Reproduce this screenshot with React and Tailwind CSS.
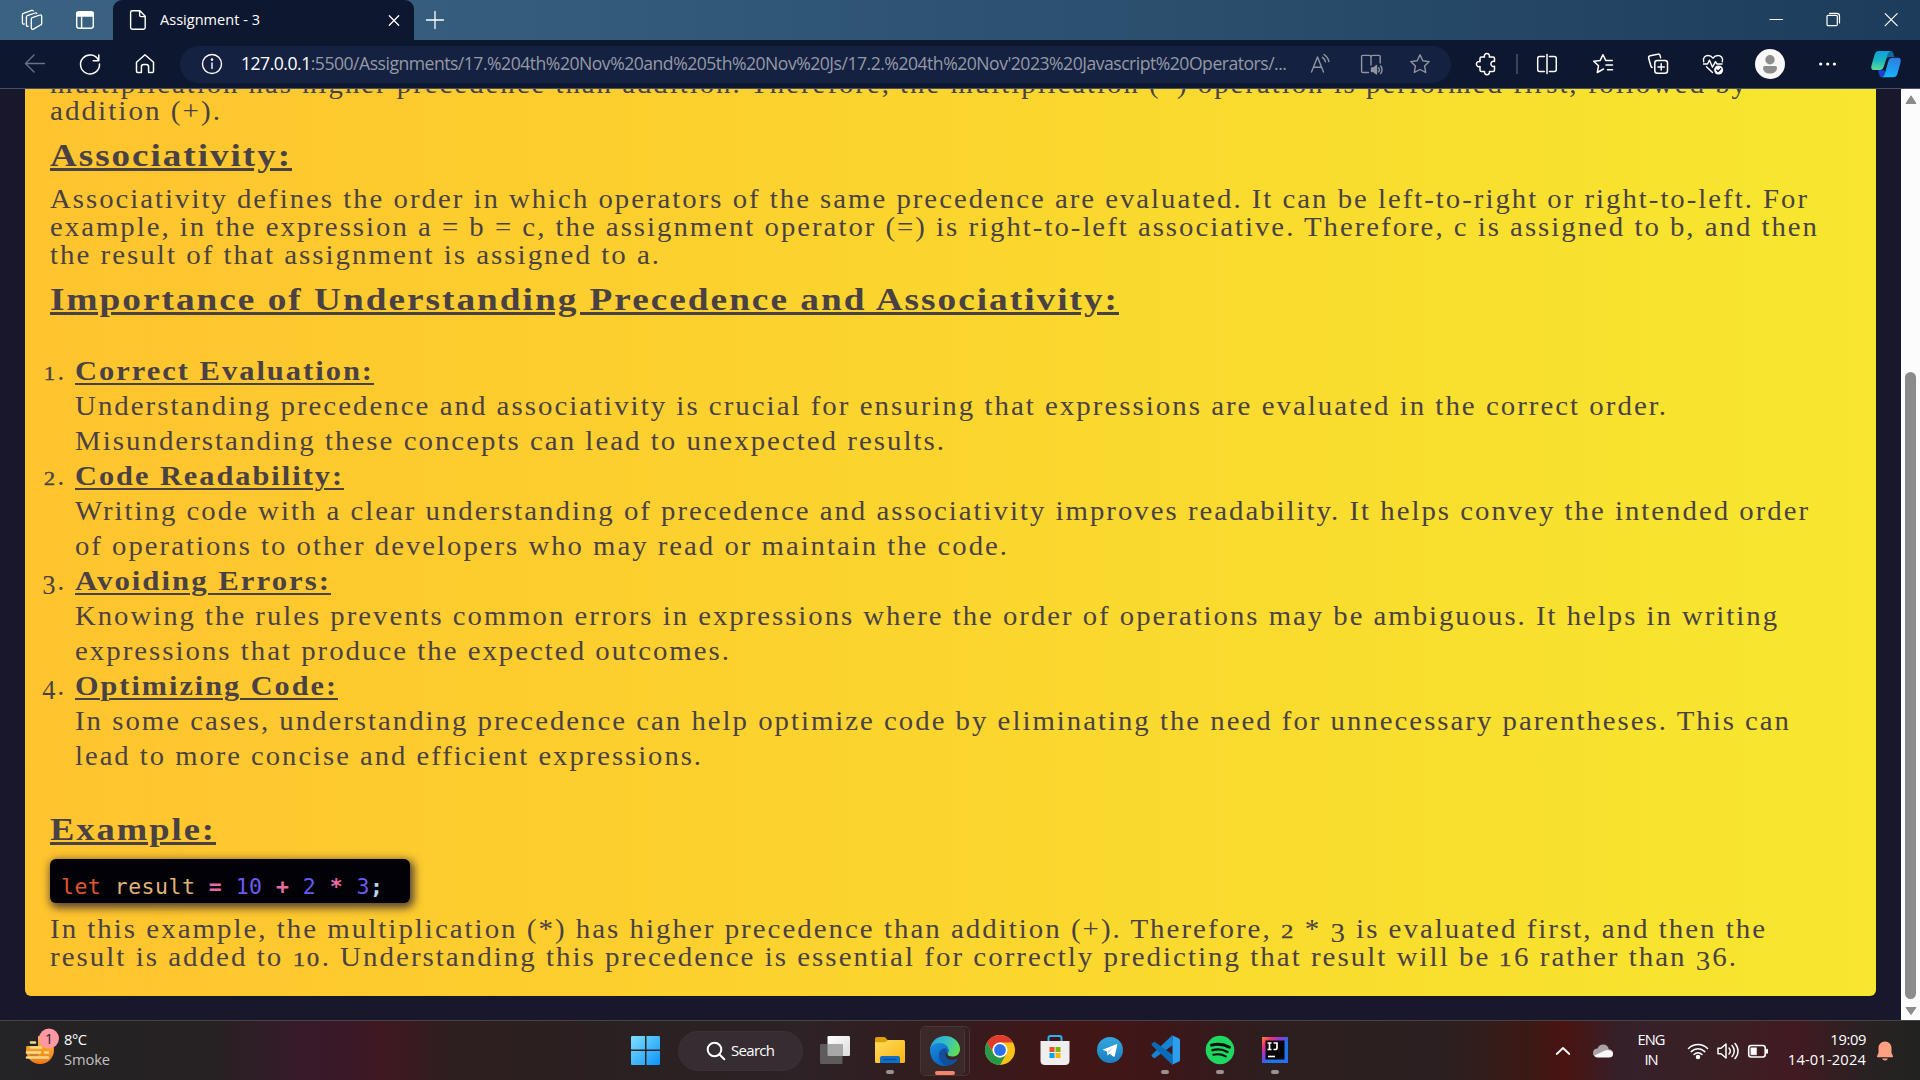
import React, { useLayoutEffect, useRef, useState } from "react";

/* A single line of text whose tracking is computed so that it spans `w` pixels. */
function Fit({ w, className = "", children }) {
  const ref = useRef(null);
  const [ls, setLs] = useState(0);
  useLayoutEffect(() => {
    const el = ref.current;
    el.style.letterSpacing = "0px";
    const natural = el.getBoundingClientRect().width;
    const value = (w - natural) / (el.textContent.length - 1);
    el.style.letterSpacing = value + "px";
    setLs(value);
  }, [w]);
  return (
    <span ref={ref} className={"inline-block whitespace-nowrap " + className} style={{ letterSpacing: ls + "px" }}>
      {children}
    </span>
  );
}

/* A line of page copy: 2px tracking, with glyphs widened to fill `w` pixels. */
function Wide({ w, trail = false, className = "", children }) {
  const ref = useRef(null);
  const [k, setK] = useState(1);
  useLayoutEffect(() => {
    const el = ref.current;
    el.style.letterSpacing = "0px";
    el.style.transform = "none";
    const natural = el.getBoundingClientRect().width;
    const n = el.textContent.length - (trail ? 0 : 1);
    const value = (w - 2 * n) / natural;
    el.style.letterSpacing = 2 / value + "px";
    el.style.transform = "scaleX(" + value + ")";
    setK(value);
  }, [w, trail]);
  return (
    <span ref={ref} className={"inline-block origin-left whitespace-nowrap " + className} style={{ letterSpacing: 2 / k + "px", transform: `scaleX(${k})` }}>
      {children}
    </span>
  );
}

/* Old-style figures: small ones sit at x-height, tall ones hang below the baseline. */
const Low = ({ children }) => <span className="mx-px inline-block h-5 scale-x-[1.2] text-[19px] leading-5 [-webkit-text-stroke:0.3px_#4a4145]">{children}</span>;
const Hang = ({ children }) => <span className="relative top-[4px]">{children}</span>;

const Line = ({ w, children }) => (
  <div className="h-7 leading-7">
    <Wide w={w}>{children}</Wide>
  </div>
);

const Heading = ({ w, className = "", children }) => (
  <h2 className={"h-10 text-[30.5px] font-bold leading-10 " + className}>
    <Wide w={w} trail className="underline decoration-[3px] underline-offset-[2px]">{children}</Wide>
  </h2>
);

const Item = ({ n, title, w, lines }) => (
  <li className="flex">
    <span className="h-[35px] w-[25px] shrink-0 -translate-x-[9px] whitespace-nowrap leading-[35px] tracking-[2px]">
      <span className="flex justify-end">{n}</span>
    </span>
    <div>
      <div className="h-[35px] font-bold leading-[35px]">
        <Wide w={w} trail className="underline decoration-2 underline-offset-[3px]">{title}</Wide>
      </div>
      {lines.map(([lw, t]) => (
        <div key={t} className="h-[35px] leading-[35px]">
          <Wide w={lw}>{t}</Wide>
        </div>
      ))}
    </div>
  </li>
);

const Ico = ({ className = "", s = 24, sw = 1.4, children }) => (
  <svg width={s} height={s} viewBox={`0 0 ${s} ${s}`} fill="none" stroke="currentColor" strokeWidth={sw} strokeLinecap="round" strokeLinejoin="round" className={"shrink-0 " + className}>
    {children}
  </svg>
);

const Star = "M12 2.8l2.8 5.9 6.4.9-4.6 4.5 1.1 6.4-5.7-3-5.7 3 1.1-6.4L2.8 9.6l6.4-.9z";

function TitleBar() {
  return (
    <div className="flex h-10 bg-[linear-gradient(90deg,#3a6382_0%,#335b7a_30%,#2a4d6c_65%,#1d3c5b_100%)] text-white">
      <Ico className="ml-5 mt-2" sw={1.3}>
        <path d="M12.300 9.600l7.600-2.600c.9-.3 1.800.3 1.800 1.200v7.200c0 .6-.3 1.100-.9 1.400l-7.400 4.300c-1 .5-2.100 0-2.100-1.200v-9c0-.6.4-1.100 1-1.300z M8.200 18.200l-.8.200c-.6 0-1-.4-1-1V8.900c0-.6.400-1.100 1-1.300L15.200 5c.7-.2 1.300 0 1.600.5 M4.200 16l-.8.100c-.6 0-1-.4-1-1V6.700c0-.6.400-1.100 1-1.300l8.300-3c.7-.2 1.300 0 1.600.5" />
      </Ico>
      <Ico className="ml-[29px] mt-2">
        <rect x="3.700" y="3.700" width="16.600" height="16.600" rx="2.600" />
        <path d="M4 4.500h16V8H4z" fill="currentColor" />
        <path d="M8.600 8v12" />
      </Ico>
      <div className="ml-[16px] flex h-10 w-[301px] rounded-t-[9px] bg-[#0e1730]">
        <Ico className="ml-[13px] mt-2">
          <path d="M6.700 2.700h7.200l5.300 5.500v11.300c0 1-.7 1.700-1.700 1.700H6.300c-1 0-1.700-.7-1.700-1.700V4.400c0-1 .7-1.700 1.700-1.700z M13.600 3v4c0 1 .6 1.600 1.600 1.600h3.800" />
        </Ico>
        <span className="ml-[10px] w-[100px] pt-[10px] text-[14.5px] leading-5">
          <Fit w={100}>Assignment - 3</Fit>
        </span>
        <Ico className="ml-[122px] mt-2" sw={1.300}><path d="M7.300 7.800l9.400 9.400M16.700 7.800l-9.400 9.400" /></Ico>
      </div>
      <Ico className="ml-[9px] mt-2" sw={1.300}><path d="M12 3.500v17M3.500 12h17" /></Ico>
      <div className="flex-1" />
      <Ico className="mt-2" sw={1.200}><path d="M6 11.500h12.500" /></Ico>
      <Ico className="ml-[33px] mt-2" sw={1.200}>
        <rect x="6" y="7.300" width="10.300" height="10.300" rx="1.200" />
        <path d="M8.600 5.400h7.200c1.700 0 2.700 1 2.700 2.600v7" />
      </Ico>
      <Ico className="ml-[34px] mr-[17px] mt-2" sw={1.200}><path d="M6.200 5.700l12 12M18.200 5.700l-12 12" /></Ico>
    </div>
  );
}

function Toolbar() {
  return (
    <div className="flex h-12 items-center bg-[#0e1730] text-white">
      <Ico className="ml-[23px] text-[#6a7183]"><path d="M21.500 11.500H2.500M11 3L2.500 11.500 11 20" /></Ico>
      <Ico className="ml-[31px]" sw={1.500}>
        <path d="M20.700 8.600A9.500 9.500 0 1 0 21.500 12 M20.800 3v5.700h-5.600" />
      </Ico>
      <Ico className="ml-[31px]" sw={1.500}>
        <path d="M3.500 10.200L12 2.700l8.500 7.500v9c0 .7-.5 1.200-1.200 1.200h-3.700v-5.600c0-1.600-.8-2.400-2.200-2.400h-2.800c-1.400 0-2.200.8-2.200 2.400v5.600H4.700c-.7 0-1.200-.5-1.200-1.200z" />
      </Ico>
      <div className="ml-[23px] flex h-[37px] w-[1271px] items-center rounded-full bg-[#152141]">
        <Ico className="ml-[20px]">
          <circle cx="12" cy="12" r="9.500" />
          <path d="M12 11v5.500" />
          <circle cx="12" cy="7.600" r=".6" fill="currentColor" />
        </Ico>
        <div className="-mt-[2px] ml-[17px] w-[1058px] text-[17.6px] leading-6 text-[#9499a5]">
          <Fit w={1046}>
            <span className="text-white">127.0.0.1</span>:5500/Assignments/17.%204th%20Nov%20and%205th%20Nov%20Js/17.2.%204th%20Nov'2023%20Javascript%20Operators/...
          </Fit>
        </div>
        <Ico className="ml-[9px] text-[#92959e]">
          <path d="M3.500 20L9.500 5l6 15M5.500 15.200h8M14.400 5.300c1.600 1 2.700 2.600 3.100 4.500M16 2.500c2.500 1.600 4.300 4 5 7" />
        </Ico>
        <Ico className="ml-[27px] text-[#92959e]">
          <path d="M12 5v8M9.500 20.500H3.800c-.7 0-1.200-.5-1.200-1.200V4.600c0-.7.5-1.200 1.200-1.200H10c1.200 0 2 .7 2 1.700 0-1 .8-1.700 2-1.700h6c.7 0 1.200.5 1.200 1.200V11" />
          <path d="M12.500 16h2l3-2.500v8.500l-3-2.500h-2z" fill="currentColor" />
          <path d="M19.700 15.800c.8 1.200.8 2.800 0 4M21.700 14c1.500 2.200 1.500 5.400 0 7.600" />
        </Ico>
        <Ico className="ml-[25px] text-[#92959e]"><path d={Star} /></Ico>
      </div>
      <Ico className="ml-[24px]" sw={1.500}>
        <path d="M6.500 5h3a2.600 2.600 0 1 1 4.800 0H18c1 0 1.500.6 1.500 1.500v3a2.600 2.600 0 1 0 0 4.800v3.800c0 1-.6 1.500-1.500 1.500h-3.600a2.500 2.500 0 1 1-4.800 0H6.500c-1 0-1.500-.6-1.500-1.500v-3.600a2.600 2.600 0 1 1 0-4.800V6.500C5 5.600 5.500 5 6.500 5z" />
      </Ico>
      <div className="ml-[17px] h-5 w-[2px] bg-[#3c4459]" />
      <Ico className="ml-[17px]" sw={1.500}>
        <path d="M9.300 4.500H4.700c-1.200 0-2 .8-2 2v11c0 1.200.8 2 2 2h4.600M14.500 4.500h4.800c1.200 0 2 .8 2 2v11c0 1.200-.8 2-2 2h-4.800" />
        <path d="M12 2.500v19" />
      </Ico>
      <Ico className="ml-[32px]" sw={1.500}>
        <path d="M12.500 17l-6.200 3.500 1.200-6.700-4.800-4.500 6.500-.9L12 2.700l2.700 5.700h6.600M15 13h6.500M16.500 17.800h5" />
      </Ico>
      <Ico className="ml-[31px]" sw={1.500}>
        <rect x="8.800" y="8.500" width="12.700" height="12.700" rx="2.500" />
        <path d="M15.200 11.800v6.200M12 14.900h6.300M6.200 15.500c-.7-.3-1.200-1-1.400-1.800L2.700 6.200c-.3-1.100.3-2.100 1.400-2.400l7.600-1.600c1.100-.3 2.100.3 2.400 1.400l.5 2.100" />
      </Ico>
      <Ico className="ml-[31px]" sw={1.400}>
        <path d="M2.700 9.800C1.500 5.500 4.500 3.500 7 3.500c2 0 3.800 1 5 2.700 1.200-1.700 3-2.700 5-2.700 2.500 0 5.500 2 4.300 6.300M2.500 12h4l2-3.800 3 7 3-5.500 1.500 2.300h5M5.500 14.800l6 5.700" />
        <circle cx="17.600" cy="18" r="4.500" fill="currentColor" stroke="none" />
        <path d="M15.700 18.100l1.400 1.400 2.600-2.700" stroke="#0e1730" />
      </Ico>
      <svg className="ml-[30px] shrink-0" width="30" height="30" viewBox="0 0 30 30">
        <circle cx="15" cy="15" r="15" fill="#f8f8f8" />
        <circle cx="15" cy="10.800" r="4.700" fill="#8d8d8d" />
        <path d="M8 18.500a1.500 1.500 0 0 1 1.500-1.500h11a1.500 1.500 0 0 1 1.500 1.500c0 4-3 6-7 6s-7-2-7-6z" fill="#8d8d8d" />
      </svg>
      <Ico className="ml-[31px]"><g fill="currentColor" stroke="none"><circle cx="4.700" cy="12" r="1.600" /><circle cx="11.700" cy="12" r="1.600" /><circle cx="18.400" cy="12" r="1.600" /></g></Ico>
      <svg className="ml-[30px] shrink-0" width="32" height="30" viewBox="0 0 32 30">
        <defs>
          <linearGradient id="cpA" x1="0" y1="0" x2="0" y2="1"><stop offset="0" stopColor="#10a0de" /><stop offset=".5" stopColor="#19b5c0" /><stop offset="1" stopColor="#5fdc92" /></linearGradient>
          <linearGradient id="cpB" x1=".6" y1="0" x2=".4" y2="1"><stop offset="0" stopColor="#2f7be0" /><stop offset="1" stopColor="#16b4fb" /></linearGradient>
        </defs>
        <path d="M17 2h3.500c2 0 2.800 1.500 3.300 4l.6 2h-4.500c-2.500 0-3.500 1-4.300 3.500z" fill="#0a6c9c" />
        <path d="M8 20.800h5.500l2 2.500-.7 5H12c-1.800 0-2.700-1.300-3.200-3.500z" fill="#1c3fc9" />
        <path d="M9 2h12c-1.700 0-2.700 1.200-3.400 3.500L14 17c-1 3-2.300 4-4.500 4H4.200C1.500 21 .8 19 1.500 16.500l3-10.500C5.300 3.300 6.500 2 9 2z" fill="url(#cpA)" />
        <path d="M22.500 8.700h5.300c2.700 0 3.500 2 2.800 4.500l-3 11c-.8 2.800-2 4-4.500 4H11.500c1.700 0 2.700-1.200 3.300-3.500L18.200 12.700c.9-3 2.100-4 4.300-4z" fill="url(#cpB)" />
      </svg>
    </div>
  );
}

const ITEMS = [
  { n: <><Low>1</Low>.</>, title: "Correct Evaluation:", w: 299, lines: [
    [1591, "Understanding precedence and associativity is crucial for ensuring that expressions are evaluated in the correct order."],
    [869, "Misunderstanding these concepts can lead to unexpected results."]] },
  { n: <><Low>2</Low>.</>, title: "Code Readability:", w: 269, lines: [
    [1733, "Writing code with a clear understanding of precedence and associativity improves readability. It helps convey the intended order"],
    [932, "of operations to other developers who may read or maintain the code."]] },
  { n: <><Hang>3</Hang>.</>, title: "Avoiding Errors:", w: 256, lines: [
    [1702, "Knowing the rules prevents common errors in expressions where the order of operations may be ambiguous. It helps in writing"],
    [654, "expressions that produce the expected outcomes."]] },
  { n: <><Hang>4</Hang>.</>, title: "Optimizing Code:", w: 263, lines: [
    [1714, "In some cases, understanding precedence can help optimize code by eliminating the need for unnecessary parentheses. This can"],
    [626, "lead to more concise and efficient expressions."]] },
].map((it) => ({ ...it, n: <span>{it.n}</span> }));

function Page() {
  return (
    <div className="flex h-[931px] overflow-hidden bg-[#19172c]">
      <main className="ml-[25px] h-[907px] w-[1851px] overflow-hidden rounded-b-[6px] bg-[linear-gradient(90deg,#ffc42e_0%,#f7e72e_100%)] pl-[25px] font-['Liberation_Serif',serif] text-[26.5px] text-[#4a4145]">
        <div className="-mt-[19px]">
          <div className="h-[27px]">
            <Line w={1696}>multiplication has higher precedence than addition. Therefore, the multiplication (*) operation is performed first, followed by</Line>
          </div>
          <Line w={170}>addition (+).</Line>
        </div>
        <Heading w={242} className="mt-[11px]">Associativity:</Heading>
        <div className="mt-[9px]">
          <Line w={1757}>Associativity defines the order in which operators of the same precedence are evaluated. It can be left-to-right or right-to-left. For</Line>
          <Line w={1767}>example, in the expression a = b = c, the assignment operator (=) is right-to-left associative. Therefore, c is assigned to b, and then</Line>
          <Line w={609}>the result of that assignment is assigned to a.</Line>
        </div>
        <Heading w={1069} className="mt-[11px]">Importance of Understanding Precedence and Associativity:</Heading>
        <ol className="mt-[34px]">
          {ITEMS.map((it) => <Item key={it.title} {...it} />)}
        </ol>
        <Heading w={166} className="mt-[36px]">Example:</Heading>
        <div className="mt-[9px] h-11 w-[360px] rounded-[6px] bg-[#020107] pl-[11px] pt-[13px] font-['DejaVu_Sans_Mono',monospace] text-[21.500px] leading-[30px] shadow-[2px_3px_8px_2px_rgba(60,45,50,0.85)]">
          <Fit w={322} className="whitespace-pre">
            <span className="text-[#e0562f]">let</span>
            <span className="text-[#e0b476]"> result</span>
            <span className="font-bold text-[#e76ba0]"> =</span>
            <span className="text-[#6a5af0]"> 10</span>
            <span className="font-bold text-[#e76ba0]"> +</span>
            <span className="text-[#6a5af0]"> 2</span>
            <span className="font-bold text-[#e76ba0]"> *</span>
            <span className="text-[#6a5af0]"> 3</span>
            <span className="font-bold text-[#bcd7ee]">;</span>
          </Fit>
        </div>
        <div className="mt-3">
          <Line w={1715}>In this example, the multiplication (*) has higher precedence than addition (+). Therefore, <Low>2</Low> * <Hang>3</Hang> is evaluated first, and then the</Line>
          <Line w={1686}>result is added to <Low>1</Low><Low>0</Low>. Understanding this precedence is essential for correctly predicting that result will be <Low>1</Low>6 rather than <Hang>3</Hang>6.</Line>
        </div>
      </main>
      <div className="ml-auto flex w-[19px] flex-col items-center bg-[#fcfcfc]">
        <svg className="mt-[6px]" width="12" height="10" viewBox="0 0 12 10"><path d="M6 .8L11 8.500H1z" fill="#8b8b8b" stroke="#8b8b8b" strokeLinejoin="round" /></svg>
        <div className="mt-[267px] h-[627px] w-[11px] rounded-full bg-[#8b8b8b]" />
        <svg className="mt-[7px]" width="12" height="10" viewBox="0 0 12 10"><path d="M6 8.500L1 1.500h10z" fill="#8b8b8b" stroke="#8b8b8b" strokeLinejoin="round" /></svg>
      </div>
    </div>
  );
}

const App32 = ({ className = "", dot = false, children }) => (
  <div className={"relative h-[59px] w-8 shrink-0 " + className}>
    <svg className="mt-[13px]" width="32" height="32" viewBox="0 0 32 32">{children}</svg>
    {dot && <div className="absolute bottom-[6px] left-3 h-1 w-2 rounded-full bg-[#9a9192]" />}
  </div>
);

function Taskbar() {
  return (
    <div className="flex h-[60px] items-center border-t border-[#484345] bg-[linear-gradient(90deg,#242325_0%,#262122_11%,#371b2b_15.500%,#3a1828_18%,#401821_20%,#2d1e1f_23.500%,#2a2122_34%,#2d2226_42%,#321c1e_48%,#421617_56%,#3f1618_60%,#2d1e1f_66%,#2b2021_75%,#3a1914_79.500%,#491412_81.500%,#35202a_84.500%,#3b2023_90%,#421a21_93.500%,#2a2122_97%,#222221_100%)] text-[14.700px] leading-5 text-white">
      <svg className="ml-6 shrink-0" width="36" height="46" viewBox="0 0 36 46">
        <defs>
          <linearGradient id="sun" x1="0" y1="0" x2="0" y2="1"><stop offset="0" stopColor="#fbc02d" /><stop offset="1" stopColor="#f07a1c" /></linearGradient>
        </defs>
        <circle cx="16" cy="22" r="14" fill="url(#sun)" />
        <path d="M0 6h14v12H0z" fill="#242325" />
        <g stroke="#f6d98c" strokeWidth="2.600" strokeLinecap="round">
          <path d="M7 14.500h4M7 19.500h10M3 24.500h13M21 24.500h3M3 29.500h21" />
        </g>
        <path d="M6 27h8" stroke="#b97f2e" strokeWidth="1.500" />
        <circle cx="25" cy="10.500" r="10" fill="#ff98a2" />
        <text x="25" y="15.500" fontSize="14" fill="#222" textAnchor="middle" fontFamily="Open Sans, sans-serif">1</text>
      </svg>
      <div className="-mt-1 ml-1 flex w-[200px] flex-col items-start">
        <Fit w={23}>8°C</Fit>
        <Fit w={46} className="text-[#c4c0c1]">Smoke</Fit>
      </div>
      <App32 className="ml-[366px]">
        <defs><linearGradient id="win" x1="0" y1="0" x2="1" y2="1"><stop offset="0" stopColor="#7fe0ff" /><stop offset="1" stopColor="#0a94fa" /></linearGradient></defs>
        <path d="M2.500 2H15v13.500H1V3.500C1 2.500 1.500 2 2.500 2zM16.500 2h12c1 0 1.500.5 1.500 1.500v12H16.500zM1 17h14v14H2.500C1.500 31 1 30.500 1 29.500zM16.500 17H30v12.500c0 1-.5 1.500-1.500 1.500h-12z" fill="url(#win)" />
      </App32>
      <div className="ml-4 flex h-10 w-[125px] shrink-0 items-center rounded-full border border-[#3b3137] bg-[#362d33] pl-[27px] text-[15px]">
        <Ico s={20} sw={2}><circle cx="8.500" cy="8.500" r="6.800" /><path d="M13.500 13.500l4.800 4.800" /></Ico>
        <span className="-mt-[2px] ml-[5px]"><Fit w={44}>Search</Fit></span>
      </div>
      <App32 className="ml-4">
        <defs><linearGradient id="tv" x1="0" y1="0" x2="1" y2="1"><stop offset="0" stopColor="#fff" /><stop offset="1" stopColor="#dcdcdc" /></linearGradient></defs>
        <rect x="8.500" y="2" width="22.500" height="20" rx="1.200" fill="url(#tv)" />
        <rect x="1" y="10" width="22.500" height="20" rx="1.200" fill="#5d5b5c" />
        <path d="M8.500 10h15v12h-14q-1 0-1-1z" fill="#a9a8a8" />
      </App32>
      <App32 className="ml-[23px]" dot>
        <defs><linearGradient id="fo" x1="0" y1="0" x2="1" y2="1"><stop offset="0" stopColor="#ffdb60" /><stop offset="1" stopColor="#f8b50c" /></linearGradient></defs>
        <path d="M1 8V4.500Q1 3 2.500 3H10q1 0 1.800 1L14 6.500V10H1z" fill="#dea000" />
        <path d="M1 8.300h10l3-2.300h15.500Q31 6 31 7.500v20Q31 29 29.500 29h-27Q1 29 1 27.500z" fill="url(#fo)" />
        <path d="M6 29v-5q0-2 2-2h16q2 0 2 2v5z" fill="#0f6fc4" />
        <path d="M9.500 25.500h13" stroke="#0a4d94" strokeWidth="1.200" />
      </App32>
      <div className="relative ml-[14px] h-[50px] w-[50px] shrink-0 rounded-[5px] border border-[#4a3536] bg-[#35201f]">
        <div className="h-12 w-[44px] rounded-[5px] border-r border-[#4a3536] bg-[#3b2828] pl-[8px] pt-[8px]">
          <svg width="32" height="32" viewBox="0 0 32 32">
            <defs>
              <linearGradient id="e1" x1="0" y1=".2" x2="1" y2=".5"><stop offset="0" stopColor="#2aa6dd" /><stop offset=".55" stopColor="#35c1c0" /><stop offset="1" stopColor="#5fdf58" /></linearGradient>
              <linearGradient id="e2" x1="0" y1="0" x2=".5" y2="1"><stop offset="0" stopColor="#1b8ee0" /><stop offset="1" stopColor="#0a62bd" /></linearGradient>
            </defs>
            <path d="M1 14.500C2 6 8.500 1 16 1c9 0 15 6.500 15 13 0 5-3.500 7.500-7.500 7.500-3.500 0-5-1.300-5-2.300 0-.8 1-1.300 1-3.500 0-3-3-5.700-7.500-5.700C6 10 2 12 1 14.500z" fill="url(#e1)" />
            <path d="M1 15c0-4 4-7 9.500-7 5 0 9 3 9 7 0 2-1 2.800-1 4-.5-1.500-2-3-4-3-3 0-4.500 3-3.500 7 1 4 4.500 7.500 8 7.500-1.500.5-2.500.5-3.500.5C7 31 1 24 1 15z" fill="url(#e2)" />
            <path d="M14.500 13.500c-3 1-5 4-4.500 8 .5 5 5 9.500 10 9 4-.7 7-3.500 8.500-6 .3-.6-.2-1-.8-.7-6 2.700-11.200.2-11.200-4.800 0-2 .8-3 2-3.800-.8-1.200-2.200-2.300-4-1.700z" fill="#0f4f9c" />
          </svg>
        </div>
        <div className="absolute bottom-0 left-[14px] h-1 w-5 rounded-full bg-[#f4846a]" />
      </div>
      <App32 className="ml-[14px]">
        <circle cx="16" cy="16" r="15" fill="#fbc116" />
        <path d="M3 8.500A15 15 0 0 1 29 8.500H16a7.500 7.500 0 0 0-6.500 11.250z" fill="#e23b2e" />
        <path d="M3 8.500A15 15 0 0 0 16 31l6.500-11.250a7.500 7.500 0 0 1-13 0z" fill="#279847" />
        <circle cx="16" cy="16" r="7.500" fill="#fff" />
        <circle cx="16" cy="16" r="5.900" fill="#2b72e8" />
      </App32>
      <App32 className="ml-[23px]">
        <path d="M9.500 8V4q0-2 2-2h9q2 0 2 2v4" fill="none" stroke="#27b2f2" strokeWidth="2" />
        <path d="M1.500 7h29v19.500q0 4.500-4.500 4.500H6q-4.500 0-4.500-4.500z" fill="#efefef" />
        <path d="M10.500 13h5v5h-5z" fill="#f04e23" /><path d="M16.500 13h5v5h-5z" fill="#7cb70a" />
        <path d="M10.500 19h5v5h-5z" fill="#04a3ec" /><path d="M16.500 19h5v5h-5z" fill="#fcb602" />
      </App32>
      <App32 className="ml-[23px]">
        <defs><linearGradient id="tg" x1="0" y1="0" x2="0" y2="1"><stop offset="0" stopColor="#32a8e0" /><stop offset="1" stopColor="#1a7fbf" /></linearGradient></defs>
        <circle cx="16" cy="16" r="13" fill="url(#tg)" />
        <path d="M8.500 15.700L22.300 10.200q1.200-.4.900 1.100L20.800 22q-.4 1.200-1.500.6l-3.800-2.800-2 1.800-.6-4z" fill="#fff" />
        <path d="M13 18l6-4.500-4.500 5.500z" fill="#a8d3ee" />
      </App32>
      <App32 className="ml-[23px]" dot>
        <path d="M23 1.500L3 20.500q-1 1 0 2l1.500 1.300q.8.700 1.800 0L24 11z" fill="#1684cf" />
        <path d="M23 30.500L3 11.500q-1-1 0-2l1.500-1.300q.8-.7 1.800 0L24 21z" fill="#0a6cb6" />
        <path d="M22.500 1L30 4.500q1 .5 1 1.500v20q0 1-1 1.500L22.500 31q1-.7 1-2V3q0-1.300-1-2z" fill="#2b9fee" />
      </App32>
      <App32 className="ml-[23px]" dot>
        <circle cx="16" cy="16" r="14.300" fill="#1fd860" />
        <g fill="none" stroke="#0a0d0b" strokeLinecap="round"><path d="M7.500 11.200c6-1.700 12.500-1 18 2" strokeWidth="2.900" /><path d="M8.500 16.200c5-1.400 10.500-.8 15 1.800" strokeWidth="2.400" /><path d="M9.200 20.800c4.300-1.100 8.800-.6 12.500 1.600" strokeWidth="2" /></g>
      </App32>
      <App32 className="ml-[23px]" dot>
        <defs><linearGradient id="ij" x1="0" y1="0" x2="1" y2="1"><stop offset="0" stopColor="#ff8a2a" /><stop offset=".2" stopColor="#ee2f7d" /><stop offset=".42" stopColor="#7a3fe0" /><stop offset=".6" stopColor="#1477ee" /><stop offset="1" stopColor="#2a6df0" /></linearGradient></defs>
        <rect x="3" y="3" width="26" height="26" fill="url(#ij)" />
        <rect x="6.500" y="6.500" width="19" height="19" fill="#080307" />
        <path d="M8.500 9h4M10.500 9v6.500M8.500 15.500h4M14.500 9h3.500v4.800q0 1.700-1.800 1.700H14.500" fill="none" stroke="#fff" strokeWidth="1.700" />
        <path d="M9 22.500h7" stroke="#fff" strokeWidth="1.600" />
      </App32>
      <div className="flex-1" />
      <Ico sw={1.800}><path d="M5.700 15L12 9l6.300 6" /></Ico>
      <svg className="ml-[17px] shrink-0" width="22" height="24" viewBox="0 0 22 24">
        <path d="M1 14.500C1 10 4 9.500 5.500 9.500 6.500 7 8.500 5.500 11 5.500c3.300 0 5.300 2 5.800 4.700C19.500 10.200 21 12 21 14.500S19 18 17 18H5C3 18 1 17 1 14.500z" fill="#a9a1a3" />
        <path d="M2.500 16.500L12 12q3-1.500 5-.8c3 .3 4 2 4 4 0 2-1.500 3.300-4 3.300H5q-2 0-2.500-2z" fill="#f8f6f6" />
      </svg>
      <div className="-mt-[3px] ml-[22px] flex w-[30px] flex-col items-center"><Fit w={28}>ENG</Fit><Fit w={14}>IN</Fit></div>
      <Ico className="ml-[20px]" sw={1.500}>
        <path d="M2.500 9.500c5.500-5.300 13.500-5.300 19 0M5.200 12.600c4-3.800 9.600-3.800 13.600 0M8 15.500c2.300-2.200 5.700-2.200 8 0" />
        <circle cx="12" cy="18" r="1.500" fill="currentColor" />
      </Ico>
      <Ico className="ml-[6px]" sw={1.500}>
        <path d="M2.500 9.300h3L10.500 5v14l-5-4.300h-3zM13.500 9c1.500 1.700 1.500 4.300 0 6M16.500 6.500c3 3.200 3 7.800 0 11M19.500 4.500c4 4.300 4 10.700 0 15" transform="translate(-.5 0)" />
      </Ico>
      <Ico className="ml-[6px]" sw={1.600}>
        <rect x="2.700" y="6.500" width="16.500" height="11.500" rx="2.500" />
        <path d="M5 8.800h5.500v7H5z" fill="currentColor" strokeWidth=".5" /><path d="M21 10.800v3" strokeWidth="2" />
      </Ico>
      <div className="-mt-[3px] ml-[17px] flex w-[79px] flex-col items-end"><Fit w={36}>19:09</Fit><Fit w={78}>14-01-2024</Fit></div>
      <svg className="ml-[10px] mr-[26px] shrink-0" width="18" height="22" viewBox="0 0 18 22">
        <path d="M9 1.500c4 0 6.500 3 6.500 6.500v4.800l1.500 3.400q.3 1-.8 1H1.800q-1.100 0-.8-1l1.500-3.400V8C2.500 4.500 5 1.500 9 1.500zM6 18.500h6q-.8 2-3 2t-3-2z" fill="#fda182" />
      </svg>
    </div>
  );
}

export default function App() {
  return (
    <div className="flex h-[1080px] w-[1920px] flex-col overflow-hidden font-['Open_Sans','Noto_Sans',sans-serif]">
      <TitleBar />
      <Toolbar />
      <div className="h-px shrink-0 bg-[#465068]" />
      <Page />
      <Taskbar />
    </div>
  );
}
